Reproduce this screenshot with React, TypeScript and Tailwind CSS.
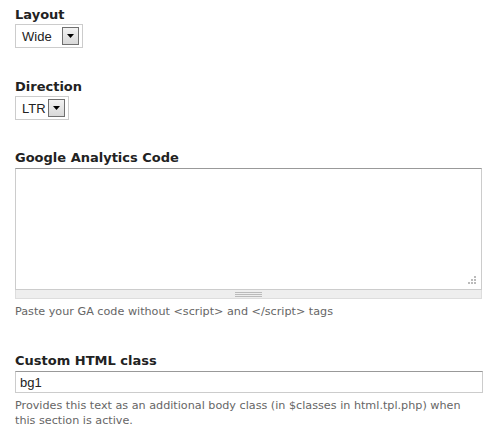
import React from "react";

const labelCls = "block text-[13px] font-bold leading-[16px] text-[#222]";
const descCls = "text-[11.2px] leading-[15px] text-[#666]";

function FakeSelect({ value, width }: { value: string; width: string }) {
  return (
    <div className={`flex h-[24px] items-center justify-between border border-[#ccc] bg-white pl-[6px] pr-[3px] ${width}`}>
      <span className="text-[13px] leading-none text-[#222] font-['Liberation_Sans',Arial,sans-serif]">{value}</span>
      <span className="flex h-[18px] w-[17px] items-center justify-center border border-[#707070] bg-gradient-to-b from-[#f2f2f2] to-[#d8d8d8]">
        <svg width="7" height="4" viewBox="0 0 7 4">
          <polygon points="0,0 7,0 3.5,4" fill="#000" />
        </svg>
      </span>
    </div>
  );
}

export default function App() {
  return (
    <div className="w-[498px] h-[438px] bg-white px-[15px] pt-[7px] font-['DejaVu_Sans',Verdana,sans-serif]">
      <div>
        <label className={labelCls}>Layout</label>
        <div className="mt-[1px]">
          <FakeSelect value="Wide" width="w-[68px]" />
        </div>
      </div>

      <div className="mt-[31px]">
        <label className={labelCls}>Direction</label>
        <div className="mt-[1px]">
          <FakeSelect value="LTR" width="w-[54px]" />
        </div>
      </div>

      <div className="mt-[30px] w-[467px]">
        <label className={labelCls}>Google Analytics Code</label>
        <div className="relative mt-[2px] h-[122px] border border-[#ccc] border-t-[#999] bg-white">
          <svg className="absolute right-[4px] bottom-[4px]" width="9" height="9" viewBox="0 0 9 9">
            <rect x="6" y="0" width="2" height="2" fill="#bbb" />
            <rect x="3" y="3" width="2" height="2" fill="#bbb" />
            <rect x="6" y="3" width="2" height="2" fill="#bbb" />
            <rect x="0" y="6" width="2" height="2" fill="#bbb" />
            <rect x="3" y="6" width="2" height="2" fill="#bbb" />
            <rect x="6" y="6" width="2" height="2" fill="#bbb" />
          </svg>
        </div>
        <div className="flex h-[9px] items-center justify-center border border-t-0 border-[#ddd] bg-[#eee]">
          <div className="flex w-[27px] flex-col gap-[1px]">
            <div className="h-px bg-[#bbb]" />
            <div className="h-px bg-[#bbb]" />
            <div className="h-px bg-[#bbb]" />
          </div>
        </div>
        <p className={`${descCls} mt-[5px]`}>Paste your GA code without &lt;script&gt; and &lt;/script&gt; tags</p>
      </div>

      <div className="mt-[34px] w-[468px]">
        <label className={labelCls}>Custom HTML class</label>
        <div className="mt-[2px] flex h-[22px] items-center border border-[#ccc] border-t-[#999] bg-white px-[4px]">
          <span className="text-[13px] leading-none text-[#222] font-['Liberation_Sans',Arial,sans-serif]">bg1</span>
        </div>
        <p className={`${descCls} mt-[5px]`}>
          Provides this text as an additional body class (in $classes in html.tpl.php) when this section is active.
        </p>
      </div>
    </div>
  );
}
